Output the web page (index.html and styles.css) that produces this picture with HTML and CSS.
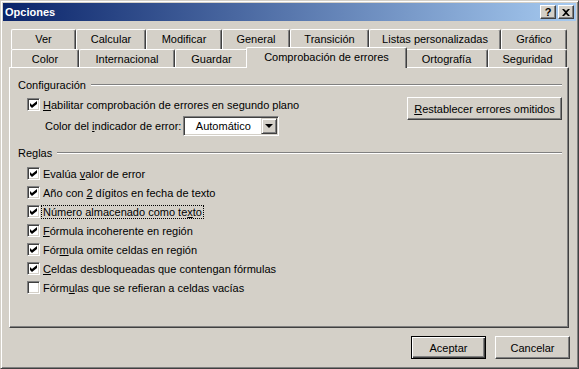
FILE: index.html
```html
<!DOCTYPE html>
<html lang="es">
<head>
  <meta charset="UTF-8">
  <title>Opciones</title>
  <link rel="stylesheet" href="styles.css">
</head>
<body>

  <div class="window">
    <!-- barra de título -->
    <div class="titlebar">
      <span class="title">Opciones</span>
      <div class="caption-btns">
        <span class="cap-btn help">?</span>
        <span class="cap-btn">
          <svg width="8" height="7" viewBox="0 0 8 7"><path d="M0 0h2l2 2 2-2h2L5 3.5 8 7H6L4 5 2 7H0l3-3.5z" fill="#000"/></svg>
        </span>
      </div>
    </div>

    <!-- pestañas -->
    <div class="tabs">
      <div class="tab-row back">
        <div class="tab t-ver">Ver</div>
        <div class="tab t-calc">Calcular</div>
        <div class="tab t-mod">Modificar</div>
        <div class="tab t-gen">General</div>
        <div class="tab t-trans">Transición</div>
        <div class="tab t-listas">Listas personalizadas</div>
        <div class="tab t-graf">Gráfico</div>
      </div>
      <div class="tab-row front">
        <div class="tab t-color">Color</div>
        <div class="tab t-inter">Internacional</div>
        <div class="tab t-guardar">Guardar</div>
        <div class="tab t-comp active">Comprobación de errores</div>
        <div class="tab t-orto">Ortografía</div>
        <div class="tab t-seg">Seguridad</div>
      </div>
    </div>

    <!-- contenido -->
    <div class="panel">
      <div class="group-head"><span>Configuración</span><div class="etch"></div></div>

      <div class="config">
        <div class="config-left">
          <div class="check-row">
            <span class="checkbox checked"></span>
            <span class="label"><u>H</u>abilitar comprobación de errores en segundo plano</span>
          </div>
          <div class="color-row">
            <span class="label">Color del <u>i</u>ndicador de error:</span>
            <div class="combo">
              <span class="combo-text">Automático</span>
              <span class="combo-btn"><span class="arrow"></span></span>
            </div>
          </div>
        </div>
        <span class="btn reset-btn"><u>R</u>establecer errores omitidos</span>
      </div>

      <div class="group-head rules-head"><span>Reglas</span><div class="etch"></div></div>

      <div class="rules">
        <div class="check-row"><span class="checkbox checked"></span><span class="label">Evalúa <u>v</u>alor de error</span></div>
        <div class="check-row"><span class="checkbox checked"></span><span class="label">Año con <u>2</u> dígitos en fecha de texto</span></div>
        <div class="check-row"><span class="checkbox checked"></span><span class="label focus">Número almacenado como te<u>x</u>to</span></div>
        <div class="check-row"><span class="checkbox checked"></span><span class="label"><u>F</u>órmula incoherente en región</span></div>
        <div class="check-row"><span class="checkbox checked"></span><span class="label">Fór<u>m</u>ula omite celdas en región</span></div>
        <div class="check-row"><span class="checkbox checked"></span><span class="label"><u>C</u>eldas desbloqueadas que contengan fórmulas</span></div>
        <div class="check-row"><span class="checkbox"></span><span class="label">Fórm<u>u</u>las que se refieran a celdas vacías</span></div>
      </div>
    </div>

    <!-- botones -->
    <div class="footer">
      <span class="btn default">Aceptar</span>
      <span class="btn">Cancelar</span>
    </div>
  </div>

</body>
</html>
```

FILE: styles.css
```css
body, html {
  margin: 0;
  padding: 0;
  background: #d4d0c8;
  font-family: 'Liberation Sans', Arial, sans-serif;
  font-size: 11px;
  color: #000;
}

.window {
  width: 579px;
  height: 369px;
  box-sizing: border-box;
  border: 1px solid;
  border-color: #d4d0c8 #404040 #404040 #d4d0c8;
  box-shadow: inset 1px 1px #fff, inset -1px -1px #808080;
  padding: 2px;
  background: #d4d0c8;
  display: flex;
  flex-direction: column;
}

u {
  text-decoration: underline;
  text-underline-offset: 1px;
}

/* title bar */
.titlebar {
  height: 18px;
  flex: none;
  display: flex;
  align-items: center;
  justify-content: space-between;
  padding: 0 2px 0 2px;
  background: linear-gradient(to right, #0a246a, #a6caf0);
}

.title {
  color: #fff;
  font-weight: bold;
  font-size: 11px;
}

.caption-btns {
  display: flex;
  gap: 2px;
}

.cap-btn {
  width: 16px;
  height: 14px;
  box-sizing: border-box;
  display: flex;
  align-items: center;
  justify-content: center;
  background: #d4d0c8;
  border: 1px solid;
  border-color: #fff #404040 #404040 #fff;
  box-shadow: inset -1px -1px #808080;
}

.cap-btn.help {
  font-weight: bold;
  font-size: 11px;
  line-height: 1;
}

/* tabs */
.tabs {
  margin: 8px 0 0 8px;
  flex: none;
}

.tab-row {
  display: flex;
}

.tab-row.back {
  height: 20px;
}

.tab-row.front {
  height: 18px;
}

.tab {
  box-sizing: border-box;
  height: 100%;
  display: flex;
  align-items: center;
  justify-content: center;
  background: #d4d0c8;
  border-top: 1px solid #fff;
  border-left: 1px solid #fff;
  border-right: 1px solid #404040;
  box-shadow: inset -1px 0 #808080;
  border-radius: 2px 2px 0 0;
  white-space: nowrap;
}

.back .tab {
  padding-bottom: 1px;
}

.t-ver { width: 65px; }
.t-calc { width: 70px; }
.t-mod { width: 76px; }
.t-gen { width: 68px; }
.t-trans { width: 79px; }
.t-listas { width: 132px; }
.t-graf { width: 66px; }

.t-color { width: 68px; }
.t-inter { width: 96px; }
.t-guardar { width: 73px; }
.t-comp { width: 157px; }
.t-orto { width: 83px; }
.t-seg { width: 79px; }

.tab.active {
  position: relative;
  z-index: 1;
  width: 161px;
  height: 21px;
  margin: -2px -2px 0;
  padding-bottom: 2px;
}

/* panel */
.panel {
  margin-left: 6px;
  width: 560px;
  height: 261px;
  box-sizing: border-box;
  flex: none;
  border: 1px solid;
  border-color: #fff #404040 #404040 #fff;
  box-shadow: inset -1px -1px #808080;
  padding: 10px 6px 0 8px;
}

.group-head {
  display: flex;
  align-items: center;
  gap: 5px;
  height: 13px;
}

.etch {
  flex: 1;
  border-top: 1px solid #808080;
  border-bottom: 1px solid #fff;
  margin-top: 1px;
}

.rules-head {
  margin-top: 10px;
}

.config {
  display: flex;
  justify-content: space-between;
  align-items: flex-start;
  margin-top: 4px;
  padding-left: 9px;
}

.check-row {
  height: 19px;
  display: flex;
  align-items: center;
  gap: 3px;
}

.checkbox {
  width: 13px;
  height: 13px;
  box-sizing: border-box;
  flex: none;
  border: 1px solid;
  border-color: #808080 #fff #fff #808080;
  box-shadow: inset 1px 1px #404040, inset -1px -1px #d4d0c8;
  background: #fff;
  display: flex;
  align-items: center;
  justify-content: center;
}

.checkbox.checked::after {
  content: "";
  width: 7px;
  height: 7px;
  background: #000;
  clip-path: polygon(0 28.5%, 28.5% 57%, 100% 0, 100% 42%, 28.5% 100%, 0 71.5%);
}

.label {
  white-space: nowrap;
}

.label.focus {
  outline: 1px dotted #000;
  outline-offset: 0;
  padding: 0 1px;
  margin-left: -1px;
}

.color-row {
  display: flex;
  align-items: center;
  gap: 2px;
  margin-top: 2px;
  padding-left: 18px;
}

.combo {
  width: 96px;
  height: 20px;
  box-sizing: border-box;
  border: 1px solid;
  border-color: #808080 #fff #fff #808080;
  box-shadow: inset 1px 1px #404040, inset -1px -1px #d4d0c8;
  background: #fff;
  display: flex;
  align-items: center;
  padding: 1px;
}

.combo-text {
  flex: 1;
  text-align: center;
}

.combo-btn {
  width: 16px;
  height: 16px;
  box-sizing: border-box;
  background: #d4d0c8;
  border: 1px solid;
  border-color: #d4d0c8 #404040 #404040 #d4d0c8;
  box-shadow: inset 1px 1px #fff, inset -1px -1px #808080;
  display: flex;
  align-items: center;
  justify-content: center;
}

.arrow {
  width: 0;
  height: 0;
  border-left: 4px solid transparent;
  border-right: 4px solid transparent;
  border-top: 4px solid #000;
}

.btn {
  box-sizing: border-box;
  height: 23px;
  display: flex;
  align-items: center;
  justify-content: center;
  background: #d4d0c8;
  border: 1px solid;
  border-color: #fff #404040 #404040 #fff;
  box-shadow: inset -1px -1px #808080;
  white-space: nowrap;
}

.reset-btn {
  width: 155px;
  margin-top: 2px;
}

.rules {
  margin-top: 5px;
  padding-left: 9px;
}

/* footer */
.footer {
  display: flex;
  justify-content: flex-end;
  gap: 9px;
  margin-top: 8px;
  padding-right: 6px;
}

.footer .btn {
  width: 75px;
}

.btn.default {
  border: 1px solid #000;
  box-shadow: inset 1px 1px #fff, inset -1px -1px #404040, inset -2px -2px #808080;
}
```
